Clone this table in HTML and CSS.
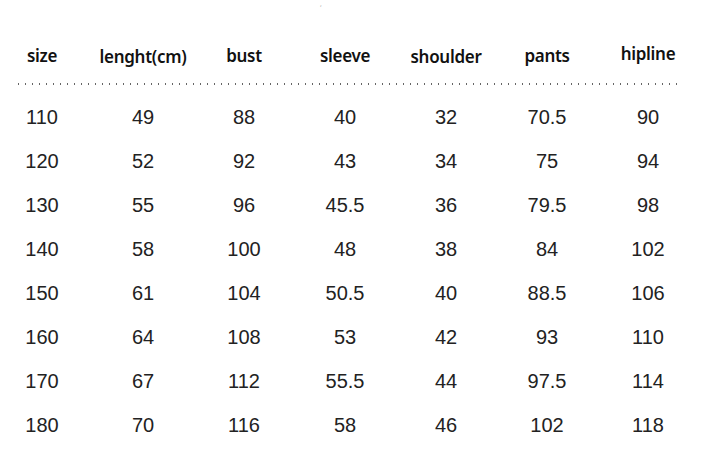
FILE: index.html
```html
<!DOCTYPE html>
<html>
<head>
<meta charset="utf-8">
<link rel="stylesheet" href="styles.css">
</head>
<body>
<div class="page">
  <div class="topmark"><span>,</span></div>
  <div class="grid head">
    <div>size</div>
    <div class="low">lenght(cm)</div>
    <div>bust</div>
    <div>sleeve</div>
    <div class="low">shoulder</div>
    <div>pants</div>
    <div class="high">hipline</div>
  </div>
  <div class="dots"></div>
  <div class="grid row"><div>110</div><div>49</div><div>88</div><div>40</div><div>32</div><div>70.5</div><div>90</div></div>
  <div class="grid row"><div>120</div><div>52</div><div>92</div><div>43</div><div>34</div><div>75</div><div>94</div></div>
  <div class="grid row"><div>130</div><div>55</div><div>96</div><div>45.5</div><div>36</div><div>79.5</div><div>98</div></div>
  <div class="grid row"><div>140</div><div>58</div><div>100</div><div>48</div><div>38</div><div>84</div><div>102</div></div>
  <div class="grid row"><div>150</div><div>61</div><div>104</div><div>50.5</div><div>40</div><div>88.5</div><div>106</div></div>
  <div class="grid row"><div>160</div><div>64</div><div>108</div><div>53</div><div>42</div><div>93</div><div>110</div></div>
  <div class="grid row"><div>170</div><div>67</div><div>112</div><div>55.5</div><div>44</div><div>97.5</div><div>114</div></div>
  <div class="grid row"><div>180</div><div>70</div><div>116</div><div>58</div><div>46</div><div>102</div><div>118</div></div>
</div>
</body>
</html>
```

FILE: styles.css
```css
html, body {
  margin: 0;
  padding: 0;
  background: #ffffff;
}

.page {
  width: 710px;
  height: 457px;
  overflow: hidden;
}

.topmark {
  height: 41px;
  padding-left: 320px;
  font-family: "Noto Sans", sans-serif;
  font-size: 7px;
  line-height: 7px;
  color: #aaa;
  box-sizing: border-box;
}

.grid {
  display: grid;
  grid-template-columns: repeat(7, 84px);
  column-gap: 17px;
  justify-items: center;
}

.head {
  height: 35px;
  font-family: "Noto Sans", sans-serif;
  font-weight: 600;
  font-size: 17px;
  line-height: 30px;
  color: #111;
  letter-spacing: -0.3px;
}

.head .low {
  padding-top: 1px;
}

.head .high {
  margin-top: -2px;
}

.dots {
  margin-left: 18px;
  width: 660px;
  height: 2px;
  margin-top: 7px;
  background-image: linear-gradient(to right, #666 1px, transparent 1px);
  background-size: 7px 2px;
}

.dots + .row {
  margin-top: 10px;
}

.row {
  height: 44px;
  line-height: 44px;
  font-family: "Liberation Sans", Arial, sans-serif;
  font-size: 20px;
  color: #222;
}
```
